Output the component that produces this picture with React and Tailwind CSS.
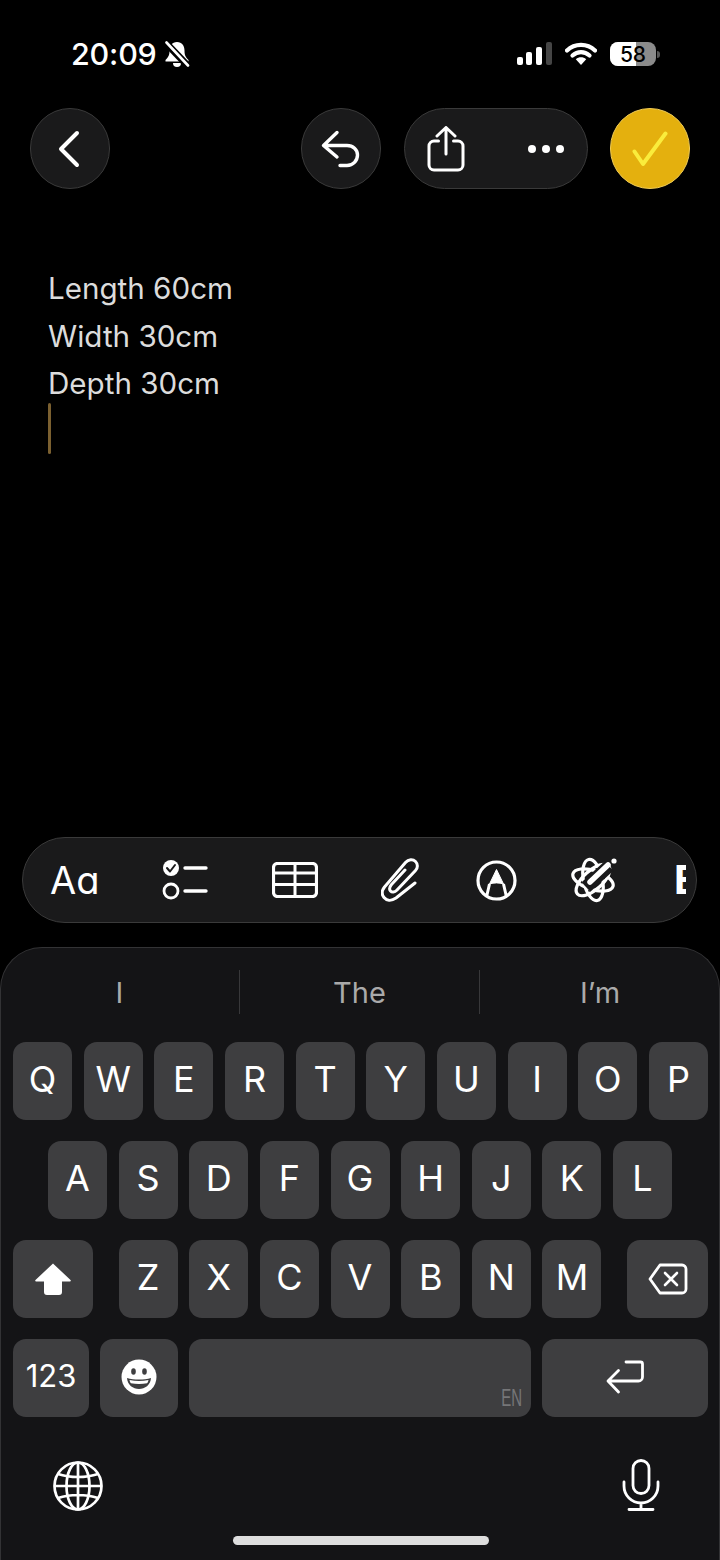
const Key = ({ children, className = "w-[59px]" }) => (
  <div className={`h-[78px] rounded-[13px] bg-[#3e3e40] flex items-center justify-center text-white text-[36px] leading-none ${className}`}>
    {children}
  </div>
);

const RoundButton = ({ children, className = "w-[80px]" }) => (
  <div className={`h-[81px] rounded-full bg-[#1a1a1b] border border-[#3a3a3a] flex items-center ${className}`}>
    {children}
  </div>
);

const Row = ({ letters }) =>
  letters.split("").map((l) => (
    <Key key={l}>
      <span className="pb-[4px]">{l}</span>
    </Key>
  ));

export default function App() {
  return (
    <div className="w-[720px] h-[1560px] bg-black flex flex-col overflow-hidden font-['Inter',sans-serif]">
      {/* status bar */}
      <div className="h-[68px] pt-[40px] pl-[71px] pr-[60px] flex items-center justify-between text-white">
        <div className="flex items-center">
          <span className="text-[30.500px] font-medium leading-none tracking-[-0.2px]">20:09</span>
          <svg className="ml-[7px]" width="26" height="27" viewBox="0 0 26 27">
            <path d="M13 1c-5 0-7.500 3.800-7.500 8.500 0 4.800-1.200 6.800-4 9.500v1.500h23V19c-2.800-2.700-4-4.700-4-9.500C20.500 4.800 18 1 13 1z" fill="#fff" />
            <path d="M9 22h8a4 4 0 0 1-8 0z" fill="#fff" />
            <path d="M1.500 1.500l23 24" stroke="#000" strokeWidth="7" />
            <path d="M2.500 1.500l21.500 23" stroke="#fff" strokeWidth="2.600" strokeLinecap="round" />
          </svg>
        </div>
        <div className="flex items-center">
          <svg width="36" height="24" viewBox="0 0 36 24">
            <rect x="1" y="15" width="6" height="8" rx="2" fill="#fff" />
            <rect x="10" y="10" width="6" height="13" rx="2" fill="#fff" />
            <rect x="20" y="5" width="6" height="18" rx="2" fill="#fff" />
            <rect x="30" y="0" width="6" height="23" rx="2" fill="#454545" />
          </svg>
          <svg className="ml-[13px]" width="32" height="24" viewBox="0 0 32 24">
            <path d="M2 8.500C9.800 1 22.200 1 30 8.500" stroke="#fff" strokeWidth="4.200" fill="none" strokeLinecap="round" />
            <path d="M7.500 13.500c5-4.600 12-4.600 17 0" stroke="#fff" strokeWidth="4.200" fill="none" strokeLinecap="round" />
            <path d="M10.800 17.200c3.200-2.500 7.200-2.500 10.400 0L16 23z" fill="#fff" />
          </svg>
          <div className="relative ml-[13px] w-[46px] h-[24px] rounded-[8px] overflow-hidden flex bg-[#8b8b8b]">
            <div className="w-[26px] bg-white" />
            <span className="absolute inset-0 flex items-center justify-center text-black text-[21px] font-medium leading-none">58</span>
          </div>
          <div className="ml-[1px] w-[3px] h-[7px] rounded-r-full bg-[#555]" />
        </div>
      </div>

      {/* header */}
      <div className="mt-[40px] pl-[30px] pr-[30px] flex items-center">
        <RoundButton className="w-[80px] justify-center">
          <svg width="24" height="38" viewBox="0 0 24 38" className="-ml-[3px]">
            <path d="M20 3L4 19 20 35" stroke="#fff" strokeWidth="4" fill="none" strokeLinecap="round" strokeLinejoin="round" />
          </svg>
        </RoundButton>
        <RoundButton className="ml-[191px] w-[80px] justify-center">
          <svg width="40" height="38" viewBox="0 0 40 38">
            <path d="M16 2.500L2.500 15.500 16 27M3 15.500h23c6 0 10.500 4 10.500 9.500S32 35.500 26 35.500h-7" stroke="#fff" strokeWidth="3.400" fill="none" strokeLinecap="round" strokeLinejoin="round" />
          </svg>
        </RoundButton>
        <RoundButton className="ml-[23px] w-[184px]">
          <svg className="ml-[22px]" width="38" height="46" viewBox="0 0 38 46">
            <path d="M19 2v26M10 10l9-8.500 9 8.500" stroke="#fff" strokeWidth="3" fill="none" strokeLinecap="round" strokeLinejoin="round" />
            <path d="M11.500 15H7a5 5 0 0 0-5 5v19a5 5 0 0 0 5 5h24a5 5 0 0 0 5-5V20a5 5 0 0 0-5-5h-4.500" stroke="#fff" strokeWidth="3" fill="none" strokeLinecap="round" />
          </svg>
          <svg className="ml-[62px]" width="38" height="10" viewBox="0 0 38 10">
            <circle cx="5" cy="5" r="4" fill="#fff" />
            <circle cx="19" cy="5" r="4" fill="#fff" />
            <circle cx="33" cy="5" r="4" fill="#fff" />
          </svg>
        </RoundButton>
        <div className="ml-[22px] w-[80px] h-[81px] rounded-full bg-[#e4b00e] border border-[#f0cb55] flex items-center justify-center">
          <svg width="36" height="36" viewBox="0 0 36 36">
            <path d="M2.500 20.500L11 33 33.500 2.500" stroke="#faec3c" strokeWidth="4" fill="none" strokeLinecap="round" strokeLinejoin="round" />
          </svg>
        </div>
      </div>

      {/* note */}
      <div className="mt-[76px] pl-[48px] text-[29.600px] leading-[47.500px] text-[#dcdcdc]">
        <div>Length 60cm</div>
        <div>Width 30cm</div>
        <div>Depth 30cm</div>
        <div className="mt-[-5px] w-[3px] h-[51px] rounded-full bg-[#7b6030]" />
      </div>

      {/* toolbar */}
      <div className="mt-auto mb-[24px] mx-[22px] w-[675px] h-[86px] rounded-full bg-[#1a1a1b] border border-[#3a3a3a] flex items-center text-white overflow-hidden">
        <span className="ml-[27px] w-[49px] text-[38px] leading-none [font-feature-settings:'cv11'] font-normal">Aa</span>
        <svg className="ml-[63px]" width="46" height="42" viewBox="0 0 46 42">
          <circle cx="9" cy="9" r="8" fill="#fff" />
          <path d="M5 9l3 3.500L13 6" stroke="#1a1a1b" strokeWidth="2" fill="none" strokeLinecap="round" strokeLinejoin="round" />
          <circle cx="9" cy="32" r="7" stroke="#fff" strokeWidth="2.800" fill="none" />
          <path d="M23 9h21M23 32h21" stroke="#fff" strokeWidth="3.400" strokeLinecap="round" />
        </svg>
        <svg className="ml-[64px]" width="46" height="36" viewBox="0 0 46 36">
          <rect x="1.500" y="1.500" width="43" height="33" rx="4" stroke="#fff" strokeWidth="3.200" fill="none" />
          <path d="M1.500 11h43M1.500 22.500h43M23 1.500v33" stroke="#fff" strokeWidth="3" />
        </svg>
        <svg className="ml-[63px]" width="38" height="44" viewBox="0 0 38 44">
          <path d="M34 25L15 40c-5 3.500-9.500 2.500-12-.5-2.500-3-2.200-7 .5-10.500L24.500 4.500c3-3.500 7.500-3.500 10-1 2.500 2.500 2.500 6.500 0 9L16 32c-2.500 2.500-5 2.700-6.500 1-1.500-1.700-1-4 1-6.500L24 12" stroke="#fff" strokeWidth="3" fill="none" strokeLinecap="round" strokeLinejoin="round" />
        </svg>
        <svg className="ml-[57px]" width="41" height="41" viewBox="0 0 41 41">
          <circle cx="20.500" cy="20.500" r="18.500" stroke="#fff" strokeWidth="3.200" fill="none" />
          <path d="M20.500 9.500L13.500 24c4.500-1.500 9.500-1.500 14 0z" fill="#fff" stroke="#fff" strokeWidth="1" strokeLinejoin="round" />
          <path d="M13.500 24l-3 13M27.500 24l3 13" stroke="#fff" strokeWidth="3" fill="none" />
        </svg>
        <svg className="ml-[54px]" width="48" height="46" viewBox="0 0 48 46">
          <g stroke="#fff" strokeWidth="3.200" fill="none">
            <ellipse cx="22" cy="23" rx="21" ry="9.500" transform="rotate(18 22 23)" />
            <ellipse cx="22" cy="23" rx="21" ry="9.500" transform="rotate(78 22 23)" />
            <ellipse cx="22" cy="23" rx="21" ry="9.500" transform="rotate(138 22 23)" />
          </g>
          <path d="M15 30L38 9" stroke="#1a1a1b" strokeWidth="13" />
          <path d="M19 25L37 8" stroke="#fff" strokeWidth="5.500" strokeLinecap="round" />
          <circle cx="43" cy="4" r="2.600" fill="#fff" />
        </svg>
        <span className="ml-[55px] w-[12px] overflow-hidden text-[40px] leading-none font-bold">E</span>
      </div>

      {/* keyboard */}
      <div className="h-[613px] rounded-t-[42px] bg-[#141416] border-t border-x border-[#333335]">
        <div className="pt-[22px] flex text-[29px] leading-none text-[#aaaaaa] -mx-px">
          <div className="w-[240px] h-[44px] flex items-center justify-center border-r border-[#38383a]">I</div>
          <div className="w-[240px] h-[44px] flex items-center justify-center border-r border-[#38383a]">The</div>
          <div className="w-[240px] h-[44px] flex items-center justify-center">I’m</div>
        </div>

        <div className="mt-[28px] -mx-px pl-[13px] pr-[12px] flex flex-col gap-[21px]">
          <div className="flex justify-between"><Row letters="QWERTYUIOP" /></div>
          <div className="flex justify-between pl-[35px] pr-[36px]"><Row letters="ASDFGHJKL" /></div>
          <div className="flex justify-between">
            <Key className="w-[80px]">
              <svg width="38" height="34" viewBox="0 0 38 34">
                <path d="M19 1.500L36.500 18c.7.8.3 1.500-.7 1.500H28V30a3 3 0 0 1-3 3H13a3 3 0 0 1-3-3V19.500H2.200c-1 0-1.400-.7-.7-1.500z" fill="#fff" />
              </svg>
            </Key>
            <div className="flex gap-[11.670px]"><Row letters="ZXCVBNM" /></div>
            <Key className="w-[81px]">
              <svg width="40" height="32" viewBox="0 0 40 32">
                <path d="M12 2h22a4 4 0 0 1 4 4v20a4 4 0 0 1-4 4H12L2 16z" stroke="#fff" strokeWidth="2.800" fill="none" strokeLinejoin="round" />
                <path d="M17 10l12 12M29 10L17 22" stroke="#fff" strokeWidth="2.600" strokeLinecap="round" />
              </svg>
            </Key>
          </div>
          <div className="flex justify-between">
            <Key className="w-[76px] !text-[31px]"><span className="pb-[5px]">123</span></Key>
            <Key className="w-[78px]">
              <svg width="36" height="36" viewBox="0 0 36 36" className="-mt-[2px]">
                <circle cx="18" cy="18" r="17.500" fill="#fff" />
                <ellipse cx="12.500" cy="12.500" rx="2.300" ry="3.200" fill="#3e3e40" />
                <ellipse cx="23.500" cy="12.500" rx="2.300" ry="3.200" fill="#3e3e40" />
                <path d="M6 19c7 2 17 2 24 0-.5 7-6 11-12 11S6.500 26 6 19z" fill="#3e3e40" />
                <path d="M8.500 21c6 1.300 13 1.300 19 0-.3 1.500-.8 2.500-1.500 3.300-5 .8-11 .8-16 0-.7-.8-1.200-1.800-1.500-3.300z" fill="#fff" />
              </svg>
            </Key>
            <Key className="w-[342px] relative">
              <span className="absolute right-[9px] bottom-[12px] text-[15px] leading-none text-[#767678] scale-y-[1.6] font-['Liberation_Sans',sans-serif]">EN</span>
            </Key>
            <Key className="w-[166px]">
              <svg width="38" height="34" viewBox="0 0 38 34" className="-mt-[3px]">
                <path d="M20 2h14.500a2 2 0 0 1 2 2v13a4 4 0 0 1-4 4H3M12.500 10.500L2 21l10.500 11" stroke="#fff" strokeWidth="2.800" fill="none" strokeLinecap="round" strokeLinejoin="round" />
              </svg>
            </Key>
          </div>
        </div>

        <div className="mt-[42px] pl-[53px] pr-[60px] -mx-px flex justify-between items-center h-[52px]">
          <svg width="50" height="50" viewBox="0 0 50 50" className="mt-[1px]">
            <g stroke="#fff" strokeWidth="2.700" fill="none">
              <circle cx="25" cy="25" r="23.500" />
              <ellipse cx="25" cy="25" rx="11.500" ry="23.500" />
              <path d="M25 1.500v47M1.500 25h47M5 13c12 4 28 4 40 0M5 37c12-4 28-4 40 0" />
            </g>
          </svg>
          <svg width="38" height="52" viewBox="0 0 38 52">
            <rect x="11" y="1.500" width="16" height="33" rx="8" stroke="#fff" strokeWidth="2.800" fill="none" />
            <path d="M2 23v4a17 17 0 0 0 34 0v-4M19 44v7M7 50.500h24" stroke="#fff" strokeWidth="2.800" fill="none" strokeLinecap="round" />
          </svg>
        </div>

        <div className="mt-[25px] ml-[232px] w-[256px] h-[9px] rounded-full bg-[#dedede]" />
      </div>
    </div>
  );
}
